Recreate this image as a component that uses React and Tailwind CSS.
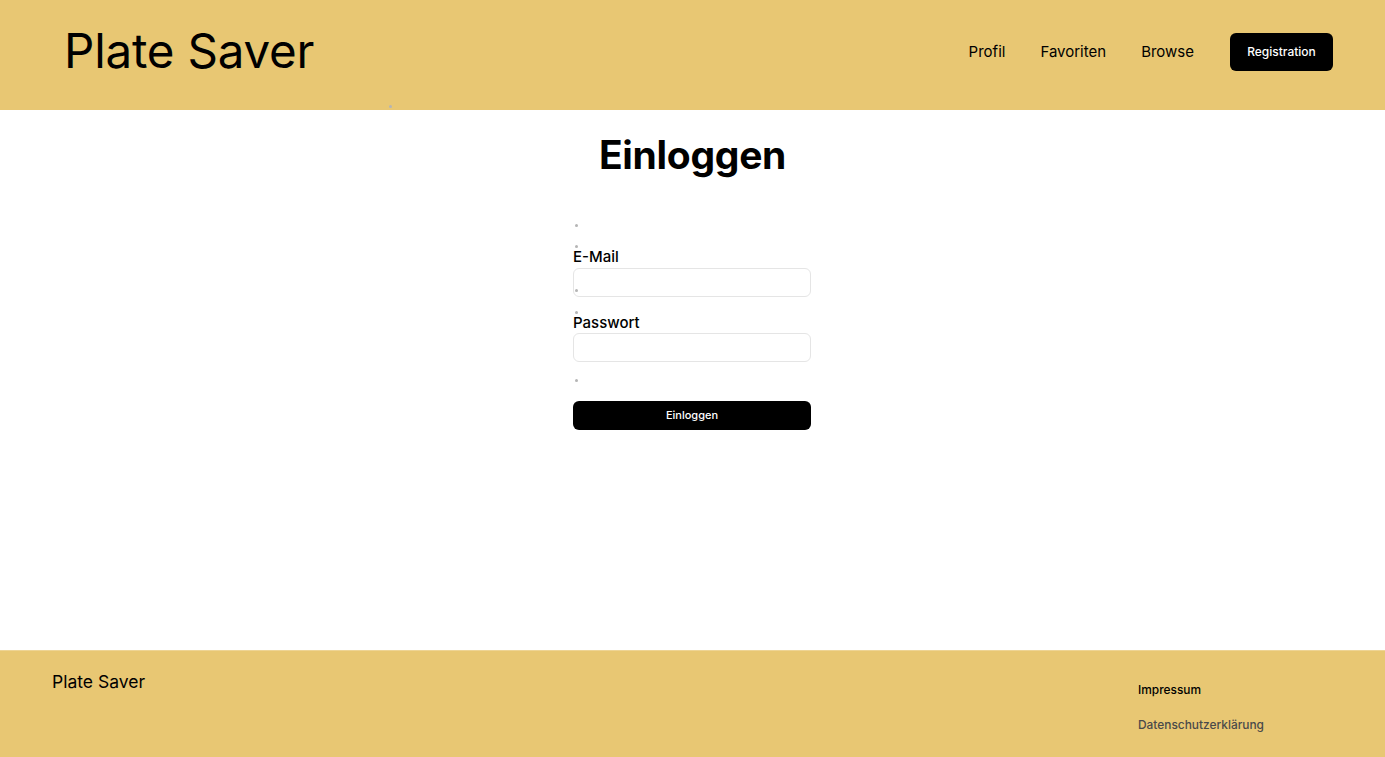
import React from 'react';

const Dot = ({ className = '' }) => (
  <span className={`block w-[3px] h-[3px] rounded-full bg-[#b5b5b5] ${className}`} />
);

const Header = () => (
  <header className="relative bg-[#e8c773] h-[110px] flex items-center justify-between pl-[64px] pr-[52px]">
    <a href="#" className="text-[47.5px] leading-none text-black tracking-[-0.2px] -mt-[8px]">Plate Saver</a>
    <nav className="flex items-center text-[15px] text-black -mt-[6px]">
      <a href="#" className="mr-[35px]">Profil</a>
      <a href="#" className="mr-[35px]">Favoriten</a>
      <a href="#" className="mr-[36px]">Browse</a>
      <button className="bg-black text-white text-[12px] font-medium rounded-md w-[103px] h-[38px]">Registration</button>
    </nav>
    <Dot className="absolute left-[389px] top-[105px] bg-[#9a8a60]" />
  </header>
);

const Login = () => (
  <main className="flex-1 flex flex-col items-center">
    <h1 className="text-[39px] font-bold text-black mt-[21px] leading-[48px] tracking-[-0.3px]">Einloggen</h1>
    <form className="w-[238px] mr-[1px] mt-[45px] flex flex-col" onSubmit={e => e.preventDefault()}>
      <Dot className="ml-[2px] mb-[18px]" />
      <Dot className="ml-[2px]" />
      <label className="text-[15px] font-medium text-black leading-[18px]">E-Mail</label>
      <input type="email" className="mt-[2px] h-[29px] w-full rounded-md border border-[#e5e5e5] bg-white px-2 text-sm outline-none" />
      <Dot className="ml-[2px] -mt-[8px] relative" />
      <Dot className="ml-[2px] mt-[19px]" />
      <label className="text-[15px] font-medium text-black leading-[18px]">Passwort</label>
      <input type="password" className="mt-[1px] h-[29px] w-full rounded-md border border-[#e5e5e5] bg-white px-2 text-sm outline-none" />
      <Dot className="ml-[2px] mt-[17px]" />
      <button className="mt-[19px] h-[29px] w-full bg-black text-white text-[11px] font-medium rounded-md">Einloggen</button>
    </form>
  </main>
);

const Footer = () => (
  <footer className="bg-[#e8c773] h-[107px] flex justify-between pl-[52px] pr-[121px] border-t border-[#eed494]">
    <div className="text-[17.5px] text-black mt-[19px] leading-[24px]">Plate Saver</div>
    <div className="flex flex-col w-[126px] text-[11.9px] font-medium mt-[31px]">
      <a href="#" className="text-black leading-[16px]">Impressum</a>
      <a href="#" className="text-[#4a4a4a] leading-[16px] mt-[19px]">Datenschutzerklärung</a>
    </div>
  </footer>
);

export default function App() {
  return (
    <div className="min-h-[757px] flex flex-col bg-white" style={{ fontFamily: 'Inter, "Noto Sans", sans-serif' }}>
      <Header />
      <Login />
      <Footer />
    </div>
  );
}
